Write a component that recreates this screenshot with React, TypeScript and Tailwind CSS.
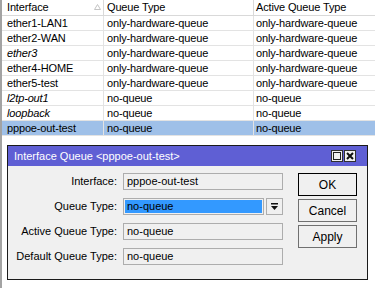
import React from 'react';

const rows = [
  { name: 'ether1-LAN1', type: 'only-hardware-queue', active: 'only-hardware-queue', dyn: false },
  { name: 'ether2-WAN', type: 'only-hardware-queue', active: 'only-hardware-queue', dyn: false },
  { name: 'ether3', type: 'only-hardware-queue', active: 'only-hardware-queue', dyn: true },
  { name: 'ether4-HOME', type: 'only-hardware-queue', active: 'only-hardware-queue', dyn: false },
  { name: 'ether5-test', type: 'only-hardware-queue', active: 'only-hardware-queue', dyn: false },
  { name: 'l2tp-out1', type: 'no-queue', active: 'no-queue', dyn: true },
  { name: 'loopback', type: 'no-queue', active: 'no-queue', dyn: true },
  { name: 'pppoe-out-test', type: 'no-queue', active: 'no-queue', dyn: false, selected: true },
];

const fields = [
  { label: 'Interface:', value: 'pppoe-out-test' },
  { label: 'Queue Type:', value: 'no-queue', select: true },
  { label: 'Active Queue Type:', value: 'no-queue' },
  { label: 'Default Queue Type:', value: 'no-queue' },
];

function TitleButton({ kind }: { kind: 'max' | 'close' }) {
  return (
    <div className="flex h-[12px] w-[12px] items-center justify-center border border-[#303030] bg-[#f0f0f0]">
      {kind === 'max' ? (
        <div className="h-[8px] w-[8px] border border-[#202020]" />
      ) : (
        <svg width="8" height="8" viewBox="0 0 8 8">
          <path d="M1 1 L7 7 M7 1 L1 7" stroke="#101010" strokeWidth="2" />
        </svg>
      )}
    </div>
  );
}

export default function App() {
  return (
    <div
      className="h-[288px] w-[375px] overflow-hidden border-l-2 border-[#a3a3a3] bg-white text-[11px] text-black"
      style={{ fontFamily: '"Liberation Sans", Arial, sans-serif' }}
    >
      {/* queue list */}
      <div className="grid grid-cols-[102px_150px_1fr] tracking-[-0.15px]">
        <div className="relative flex h-[16px] items-center border-r border-b border-[#d9d9d9] pl-[5px]">
          Interface
          <svg className="absolute left-[92px] top-[4px]" width="7" height="6" viewBox="0 0 7 6">
            <path d="M3.5 0.5 L6.5 5.5 L0.5 5.5 Z" fill="none" stroke="#c4c4c4" />
          </svg>
        </div>
        <div className="flex h-[16px] items-center border-r border-b border-[#d9d9d9] pl-[3px]">Queue Type</div>
        <div className="flex h-[16px] items-center border-b border-[#d9d9d9] pl-[2px]">Active Queue Type</div>
        {rows.map((r) => (
          <React.Fragment key={r.name}>
            <div
              className={`flex h-[15px] items-center border-r border-b border-[#e3e3e3] pl-[5px] ${r.dyn ? 'italic' : ''} ${r.selected ? 'bg-[#9fc0e8]' : ''}`}
            >
              {r.name}
            </div>
            <div className={`flex h-[15px] items-center border-r border-b border-[#e3e3e3] pl-[3px] ${r.selected ? 'bg-[#9fc0e8]' : ''}`}>
              {r.type}
            </div>
            <div className={`flex h-[15px] items-center border-b border-[#e3e3e3] pl-[2px] ${r.selected ? 'bg-[#9fc0e8]' : ''}`}>
              {r.active}
            </div>
          </React.Fragment>
        ))}
      </div>

      {/* dialog */}
      <div className="ml-[5px] mt-[9px] flex h-[135px] w-[361px] flex-col border border-[#1a1a1a] bg-[#f0f0f0]">
        <div className="flex h-[20px] items-center justify-between bg-[#5f5fd4] pl-[6px] pr-[11px] text-white">
          <span>Interface Queue &lt;pppoe-out-test&gt;</span>
          <div className="flex gap-[1px]">
            <TitleButton kind="max" />
            <TitleButton kind="close" />
          </div>
        </div>
        <div className="flex pt-[7px]">
          <div className="flex w-[275px] flex-col gap-[8px]">
            {fields.map((f) => (
              <div key={f.label} className="flex h-[17px] items-center">
                <div className="w-[110px] pr-[1px] text-right">{f.label}</div>
                <div className="ml-[5px] flex h-[17px] w-[160px] gap-[2px]">
                  {f.select ? (
                    <>
                      <div className="flex h-full flex-1 items-center border border-[#adadad] bg-[#f0f0f0] p-[1px]">
                        <div className="flex h-full w-full items-center bg-[#3399ff] pl-[2px]">{f.value}</div>
                      </div>
                      <div className="flex h-full w-[17px] items-center justify-center border border-[#adadad]">
                        <svg width="7" height="8" viewBox="0 0 7 8">
                          <rect x="0" y="0" width="7" height="1.5" fill="#111" />
                          <path d="M0 3 L7 3 L3.5 7 Z" fill="#111" />
                        </svg>
                      </div>
                    </>
                  ) : (
                    <div className="flex h-full w-full items-center border border-[#adadad] pl-[3px]">{f.value}</div>
                  )}
                </div>
              </div>
            ))}
          </div>
          <div className="ml-[15px] flex w-[59px] flex-col gap-[3px] text-[12px]">
            <div className="flex h-[23px] items-center justify-center border border-black">OK</div>
            <div className="flex h-[23px] items-center justify-center border border-[#707070]">Cancel</div>
            <div className="flex h-[23px] items-center justify-center border border-[#707070]">Apply</div>
          </div>
        </div>
      </div>
    </div>
  );
}
